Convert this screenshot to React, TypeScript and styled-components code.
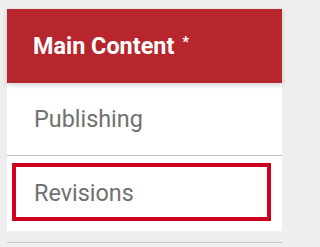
import React from "react";
import styled, { createGlobalStyle } from "styled-components";

const Global = createGlobalStyle`
  html, body { margin: 0; padding: 0; background: #eeeeee; }
  body { font-family: Roboto, "Liberation Sans", Arial, sans-serif; }
`;

const Page = styled.div`
  padding: 9px 12px 0 7px;
  width: 275px;
`;

const Panel = styled.nav`
  background: #ffffff;
  display: flex;
  flex-direction: column;
`;

const Header = styled.div`
  position: relative;
  z-index: 1;
  height: 74px;
  box-sizing: border-box;
  padding-left: 26px;
  display: flex;
  align-items: center;
  background: #b8262d;
  color: #ffffff;
  font-size: 23.4px;
  font-weight: 700;
  box-shadow: 0 2px 5px rgba(0, 0, 0, 0.18);
`;

const Star = styled.span`
  font-size: 15px;
  font-weight: 700;
  margin-left: 8px;
  margin-top: -8px;
`;

const Item = styled.div`
  height: 73px;
  box-sizing: border-box;
  padding-left: 27px;
  display: flex;
  align-items: center;
  font-size: 23.4px;
  color: #707070;
  border-bottom: 1px solid #bdbdbd;
`;

const FocusWrap = styled.div`
  height: 75px;
  box-sizing: border-box;
  padding: 7px 11px 10px 5px;
  display: flex;
`;

const FocusBox = styled.div`
  flex: 1;
  border: 4px solid #d0011f;
  padding-left: 18px;
  padding-top: 2px;
  display: flex;
  align-items: center;
  font-size: 23.4px;
  color: #707070;
`;

const NextPanel = styled.div`
  margin-top: 11px;
  border-top: 1px solid #c8c8c8;
  height: 4px;
`;

export default function App() {
  return (
    <>
      <Global />
      <Page>
        <Panel>
          <Header>
            Main Content<Star>*</Star>
          </Header>
          <Item>Publishing</Item>
          <FocusWrap>
            <FocusBox>Revisions</FocusBox>
          </FocusWrap>
        </Panel>
        <NextPanel />
      </Page>
    </>
  );
}
